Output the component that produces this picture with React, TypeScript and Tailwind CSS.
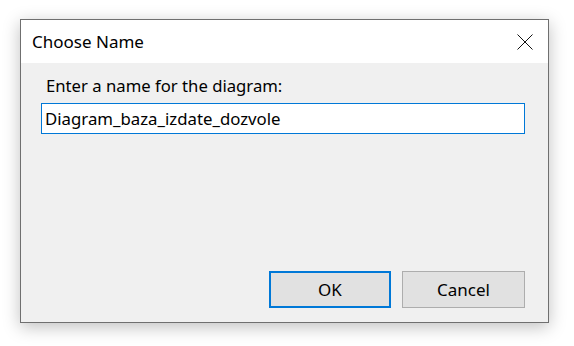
export default function App() {
  return (
    <div className="w-[574px] h-[346px] bg-white pl-[20px] pt-[19px] font-['Noto_Sans',sans-serif] text-[#000]">
      <div className="w-[529px] h-[304px] border border-[#6f6f6f] bg-[#f0f0f0] flex flex-col shadow-[0_4px_16px_rgba(0,0,0,0.25)]">
        <div className="h-[43px] bg-white flex items-center justify-between pl-[11px] pr-[15px]">
          <span className="text-[17px] leading-none">Choose Name</span>
          <svg width="16" height="16" viewBox="0 0 16 16" className="mt-[1px]">
            <path d="M0.5 0.5 L15.5 15.5 M15.5 0.5 L0.5 15.5" stroke="#111" strokeWidth="1" fill="none" />
          </svg>
        </div>
        <div className="flex-1 flex flex-col px-[20px]">
          <div className="pt-[11px] pl-[5px] text-[16.7px] leading-[23px]">Enter a name for the diagram:</div>
          <div className="mt-[6px] h-[31px] w-[484px] border border-[#0078d7] bg-white flex items-center pl-[3px] text-[16.8px]">
            Diagram_baza_izdate_dozvole
          </div>
          <div className="mt-auto mb-[14px] flex justify-end gap-[11px] pr-[3px]">
            <button className="w-[122px] h-[37px] border-2 border-[#0078d7] bg-[#e1e1e1] text-[17px]">OK</button>
            <button className="w-[123px] h-[37px] border border-[#adadad] bg-[#e1e1e1] text-[17px]">Cancel</button>
          </div>
        </div>
      </div>
    </div>
  );
}
